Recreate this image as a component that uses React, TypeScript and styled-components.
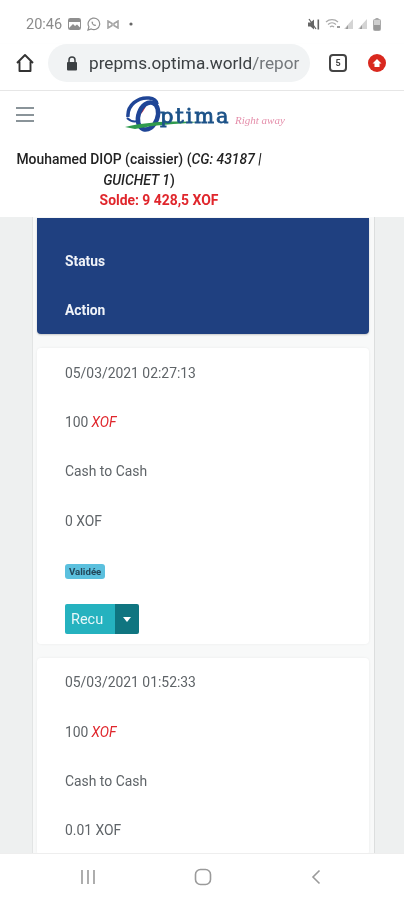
import React from "react";
import styled, { createGlobalStyle } from "styled-components";

const GlobalStyle = createGlobalStyle`
    html, body {
        margin: 0;
        padding: 0;
        background: #fff;
    }
    * {
        box-sizing: border-box;
    }
`;

const Phone = styled.div`
    display: flex;
    flex-direction: column;
    width: 404px;
    height: 900px;
    overflow: hidden;
    background: #fff;
    font-family: Roboto, "Liberation Sans", sans-serif;
    filter: blur(0.55px);
`;

const StatusBar = styled.div`
    display: flex;
    align-items: center;
    justify-content: space-between;
    height: 44px;
    padding: 4px 23px 0 26px;
    flex: none;
`;

const StatusGroup = styled.div`
    display: flex;
    align-items: center;
    gap: 5px;
`;

const Clock = styled.span`
    font-size: 14.5px;
    color: #8b8b8b;
    margin-right: 1px;
`;

const BrowserBar = styled.div`
    display: flex;
    align-items: center;
    height: 47px;
    padding: 0 0 8px 15px;
    flex: none;
    border-bottom: 1px solid #e6e6e6;
    box-shadow: 0 1px 2px rgba(0, 0, 0, 0.08);
`;

const UrlPill = styled.div`
    display: flex;
    align-items: center;
    width: 262px;
    height: 38px;
    margin-left: 13px;
    padding-left: 18px;
    border-radius: 19px;
    background: #f1f3f4;
    overflow: hidden;
`;

const UrlHost = styled.span`
    margin-left: 11px;
    font-size: 17.2px;
    color: #3c4043;
    white-space: nowrap;
`;

const UrlPath = styled.span`
    color: #74787c;
`;

const TabCount = styled.div`
    display: flex;
    align-items: center;
    justify-content: center;
    width: 18px;
    height: 18px;
    margin-left: 19px;
    border: 2px solid #444;
    border-radius: 4px;
    font-size: 9px;
    font-weight: 700;
    color: #444;
`;

const UpdateBadge = styled.div`
    display: flex;
    align-items: center;
    justify-content: center;
    width: 18px;
    height: 18px;
    margin-left: 21px;
    border-radius: 50%;
    background: #d9281e;
`;

const SiteHeader = styled.header`
    flex: none;
    height: 126px;
    padding-top: 1px;
    background: #fff;
`;

const TopRow = styled.div`
    display: flex;
    align-items: flex-start;
    height: 57px;
    padding-left: 16px;
`;

const Burger = styled.div`
    display: flex;
    flex-direction: column;
    gap: 4.5px;
    width: 18px;
    margin-top: 15px;
`;

const BurgerLine = styled.span`
    display: block;
    height: 2px;
    background: #8a9499;
`;

const LogoWrap = styled.div`
    margin-left: 91px;
    margin-top: 4px;
    width: 170px;
    height: 38px;
`;

const UserName = styled.div`
    width: 278px;
    font-size: 13.9px;
    font-weight: 500;
    line-height: 20.5px;
    text-align: center;
    color: #222;
`;

const Balance = styled.div`
    width: 318px;
    font-size: 13.9px;
    font-weight: 700;
    line-height: 20px;
    text-align: center;
    color: #e0262c;
`;

const Main = styled.main`
    flex: 1;
    min-height: 0;
    overflow: hidden;
    padding: 0 29px 0 32px;
    background: #eef0f0;
`;

const Panel = styled.div`
    height: 100%;
    padding: 1px 5px 0 4px;
    background: #f8f9f9;
    border-left: 1px solid #e2e4e4;
    border-right: 1px solid #dcdede;
`;

const HeadCard = styled.div`
    display: flex;
    flex-direction: column;
    height: 116px;
    padding-top: 18px;
    border-radius: 0 0 4px 4px;
    background: #1f4080;
    box-shadow: 0 1px 2px rgba(0, 0, 0, 0.2);
`;

const HeadCell = styled.div`
    display: flex;
    align-items: center;
    height: 49.5px;
    padding-left: 28px;
    font-size: 13.8px;
    font-weight: 700;
    color: #f0f3f8;
`;

const Card = styled.div`
    margin-top: 14px;
    border-radius: 4px;
    background: #fff;
    box-shadow: 0 0 3px rgba(0, 0, 0, 0.06);

    &:first-of-type {
        margin-top: 15px;
    }
`;

const Cell = styled.div`
    display: flex;
    align-items: center;
    height: 49.3px;
    padding-left: 28px;
    font-size: 13.9px;
    color: #5f6468;
`;

const Currency = styled.em`
    margin-left: 3px;
    color: #e0262c;
`;

const Badge = styled.span`
    display: inline-block;
    margin-top: 3px;
    padding: 2px 4px;
    border-radius: 3px;
    background: #5bc0de;
    font-size: 9.7px;
    font-weight: 700;
    line-height: 11px;
    color: #24475a;
`;

const SplitButton = styled.div`
    display: flex;
    height: 30px;
    border-radius: 2px;
    overflow: hidden;
`;

const ButtonLabel = styled.span`
    display: flex;
    align-items: center;
    width: 50px;
    padding-left: 6px;
    background: #25b2bf;
    font-size: 14.5px;
    color: #e6f7f9;
`;

const ButtonCaret = styled.span`
    display: flex;
    align-items: center;
    justify-content: center;
    width: 24px;
    background: #0f7580;

    &::after {
        content: "";
        border-left: 4.5px solid transparent;
        border-right: 4.5px solid transparent;
        border-top: 5px solid #fff;
    }
`;

const NavBar = styled.nav`
    display: flex;
    align-items: center;
    justify-content: space-between;
    flex: none;
    height: 47px;
    padding: 0 82px 0 80px;
    background: #fff;
    border-top: 1px solid #eee;
`;

const icon = "#8f8f8f";

const StatusLeftIcons = () => (
    <>
        <svg width="13" height="12" viewBox="0 0 13 12">
            <rect x="0.5" y="0.5" width="12" height="11" rx="1" fill="none" stroke={icon} />
            <path d="M1 10 5 6l2 2 2-1.500 3 3V11H1z" fill={icon} />
            <rect x="1" y="1" width="11" height="3" fill={icon} />
        </svg>
        <svg width="14" height="14" viewBox="0 0 14 14" style={{ marginLeft: 1 }}>
            <path d="M1 13l.9-3.200A5.800 5.800 0 1 1 4.200 12z" fill="none" stroke={icon} strokeWidth="1.200" />
            <path d="M5 4.200c-.8.8-.5 2.200.7 3.500 1.300 1.300 2.700 1.700 3.500.8l-1.200-1.200-.8.5-1.500-1.600.5-.8z" fill={icon} />
        </svg>
        <svg width="12" height="9" viewBox="0 0 12 9" style={{ marginLeft: 1 }}>
            <path d="M1 1v7l4-2.500V3.500zM11 1v7L7 5.500v-2z" fill="none" stroke="#a5a5a5" strokeWidth="1.600" />
        </svg>
        <svg width="4" height="4" viewBox="0 0 4 4" style={{ marginLeft: 5 }}>
            <circle cx="2" cy="2" r="1.600" fill="#666" />
        </svg>
    </>
);

const StatusRightIcons = () => (
    <>
        <svg width="12" height="13" viewBox="0 0 12 13">
            <path d="M0 4.500h2.500L6 1.500v10l-3.500-3H0z" fill="#666" />
            <path d="M1 1l7 10" stroke="#666" strokeWidth="1.300" />
            <rect x="9.500" y="1.500" width="1.600" height="10" fill="#666" />
        </svg>
        <svg width="16" height="12" viewBox="0 0 16 12">
            <path d="M1 4a9 9 0 0 1 12 0M3 6.500a6 6 0 0 1 8 0M5 9a3 3 0 0 1 4 0" fill="none" stroke="#aaa" strokeWidth="1.200" />
            <rect x="12" y="8" width="3" height="2" fill="#999" />
        </svg>
        <svg width="10" height="10" viewBox="0 0 10 10" style={{ marginLeft: -2 }}>
            <path d="M9 0v10H0z" fill="#d4d4d4" />
            <path d="M4 6v4H1.500z" fill="#999" />
        </svg>
        <svg width="10" height="10" viewBox="0 0 10 10" style={{ marginLeft: -1 }}>
            <path d="M9 0v10H0z" fill="#d4d4d4" />
            <path d="M4 6v4H1.500z" fill="#999" />
        </svg>
        <svg width="8" height="13" viewBox="0 0 8 13">
            <rect x="2.500" y="0" width="3" height="1.500" fill="#aaa" />
            <rect x="0.500" y="1.500" width="7" height="11" rx="1" fill="#cfcfcf" stroke="#aaa" />
            <rect x="1" y="7" width="6" height="5" fill="#999" />
        </svg>
    </>
);

const HomeIcon = () => (
    <svg width="20" height="20" viewBox="0 0 20 20">
        <path d="M2 10 10 2l8 8M4.500 8.500V18h11V8.500" fill="none" stroke="#333" strokeWidth="1.900" strokeLinejoin="round" />
    </svg>
);

const LockIcon = () => (
    <svg width="12" height="15" viewBox="0 0 12 15">
        <path d="M3 6V4a3 3 0 0 1 6 0v2" fill="none" stroke="#3c4043" strokeWidth="1.500" />
        <rect x="1" y="6" width="10" height="8.500" rx="1" fill="#3c4043" />
    </svg>
);

const Logo = () => (
    <svg width="170" height="38" viewBox="0 0 170 38">
        <path d="M3 21C2 9 13 1 24 2c5 .5 8 3 8 6" fill="none" stroke="#1f4596" strokeWidth="3.500" />
        <path d="M2 22c3 3 7 4 11 3" fill="none" stroke="#1f4596" strokeWidth="2" />
        <path d="M11 20c3-6 6-10 11-13-1 5-5 10-8 13z" fill="#d6303c" />
        <ellipse cx="23" cy="20" rx="9.500" ry="14" fill="none" stroke="#1f4596" strokeWidth="4.500" transform="rotate(20 23 20)" />
        <path d="M0 31C25 25 50 25 76 26 50 28 28 29 10 33z" fill="#2f9a4e" />
        <text x="35" y="27" fontFamily="'DejaVu Serif', serif" fontSize="21" letterSpacing="1.900" stroke="#1c5288" strokeWidth="0.800" fill="#1c5288">
            ptima
        </text>
        <text x="110" y="28" fontFamily="'Liberation Serif', serif" fontStyle="italic" fontSize="11" fill="#e58fab">
            Right away
        </text>
    </svg>
);

const TabUpdateIcon = () => (
    <svg width="10" height="10" viewBox="0 0 10 10">
        <path d="M5 1 9.500 5.500H7.500V9h-5V5.500H.5z" fill="#fff" />
    </svg>
);

const MenuIcon = () => (
    <svg width="16" height="16" viewBox="0 0 16 16">
        <path d="M2 1v14M8 1v14M14 1v14" stroke="#9a9a9a" strokeWidth="1.600" />
    </svg>
);

const HomeNavIcon = () => (
    <svg width="18" height="18" viewBox="0 0 18 18">
        <rect x="1.500" y="1.500" width="15" height="15" rx="5" fill="none" stroke="#9a9a9a" strokeWidth="1.600" />
    </svg>
);

const BackIcon = () => (
    <svg width="12" height="16" viewBox="0 0 12 16">
        <path d="M9.500 1.500 3 8l6.500 6.500" fill="none" stroke="#9a9a9a" strokeWidth="1.600" />
    </svg>
);

interface IOperation {
    date: string;
    amount: string;
    type: string;
    fees: string;
    complete: boolean;
}

const operations: IOperation[] = [
    { date: "05/03/2021 02:27:13", amount: "100", type: "Cash to Cash", fees: "0 XOF", complete: true },
    { date: "05/03/2021 01:52:33", amount: "100", type: "Cash to Cash", fees: "0.01 XOF", complete: false },
];

const App: React.FC = () => {
    return (
        <Phone>
            <GlobalStyle />
            <StatusBar>
                <StatusGroup>
                    <Clock>20:46</Clock>
                    <StatusLeftIcons />
                </StatusGroup>
                <StatusGroup>
                    <StatusRightIcons />
                </StatusGroup>
            </StatusBar>
            <BrowserBar>
                <HomeIcon />
                <UrlPill>
                    <LockIcon />
                    <UrlHost>
                        prepms.optima.world<UrlPath>/repor</UrlPath>
                    </UrlHost>
                </UrlPill>
                <TabCount>5</TabCount>
                <UpdateBadge>
                    <TabUpdateIcon />
                </UpdateBadge>
            </BrowserBar>
            <SiteHeader>
                <TopRow>
                    <Burger>
                        <BurgerLine />
                        <BurgerLine />
                        <BurgerLine />
                    </Burger>
                    <LogoWrap>
                        <Logo />
                    </LogoWrap>
                </TopRow>
                <UserName>
                    Mouhamed DIOP (caissier) (<em>CG: 43187 | GUICHET 1</em>)
                </UserName>
                <Balance>Solde: 9 428,5 XOF</Balance>
            </SiteHeader>
            <Main>
                <Panel>
                    <HeadCard>
                        <HeadCell>Status</HeadCell>
                        <HeadCell>Action</HeadCell>
                    </HeadCard>
                    {operations.map((op) => (
                        <Card key={op.date}>
                            <Cell>{op.date}</Cell>
                            <Cell>
                                {op.amount} <Currency>XOF</Currency>
                            </Cell>
                            <Cell>{op.type}</Cell>
                            <Cell>{op.fees}</Cell>
                            {op.complete && (
                                <>
                                    <Cell>
                                        <Badge>Validée</Badge>
                                    </Cell>
                                    <Cell>
                                        <SplitButton>
                                            <ButtonLabel>Recu</ButtonLabel>
                                            <ButtonCaret />
                                        </SplitButton>
                                    </Cell>
                                </>
                            )}
                        </Card>
                    ))}
                </Panel>
            </Main>
            <NavBar>
                <MenuIcon />
                <HomeNavIcon />
                <BackIcon />
            </NavBar>
        </Phone>
    );
};

export default App;
